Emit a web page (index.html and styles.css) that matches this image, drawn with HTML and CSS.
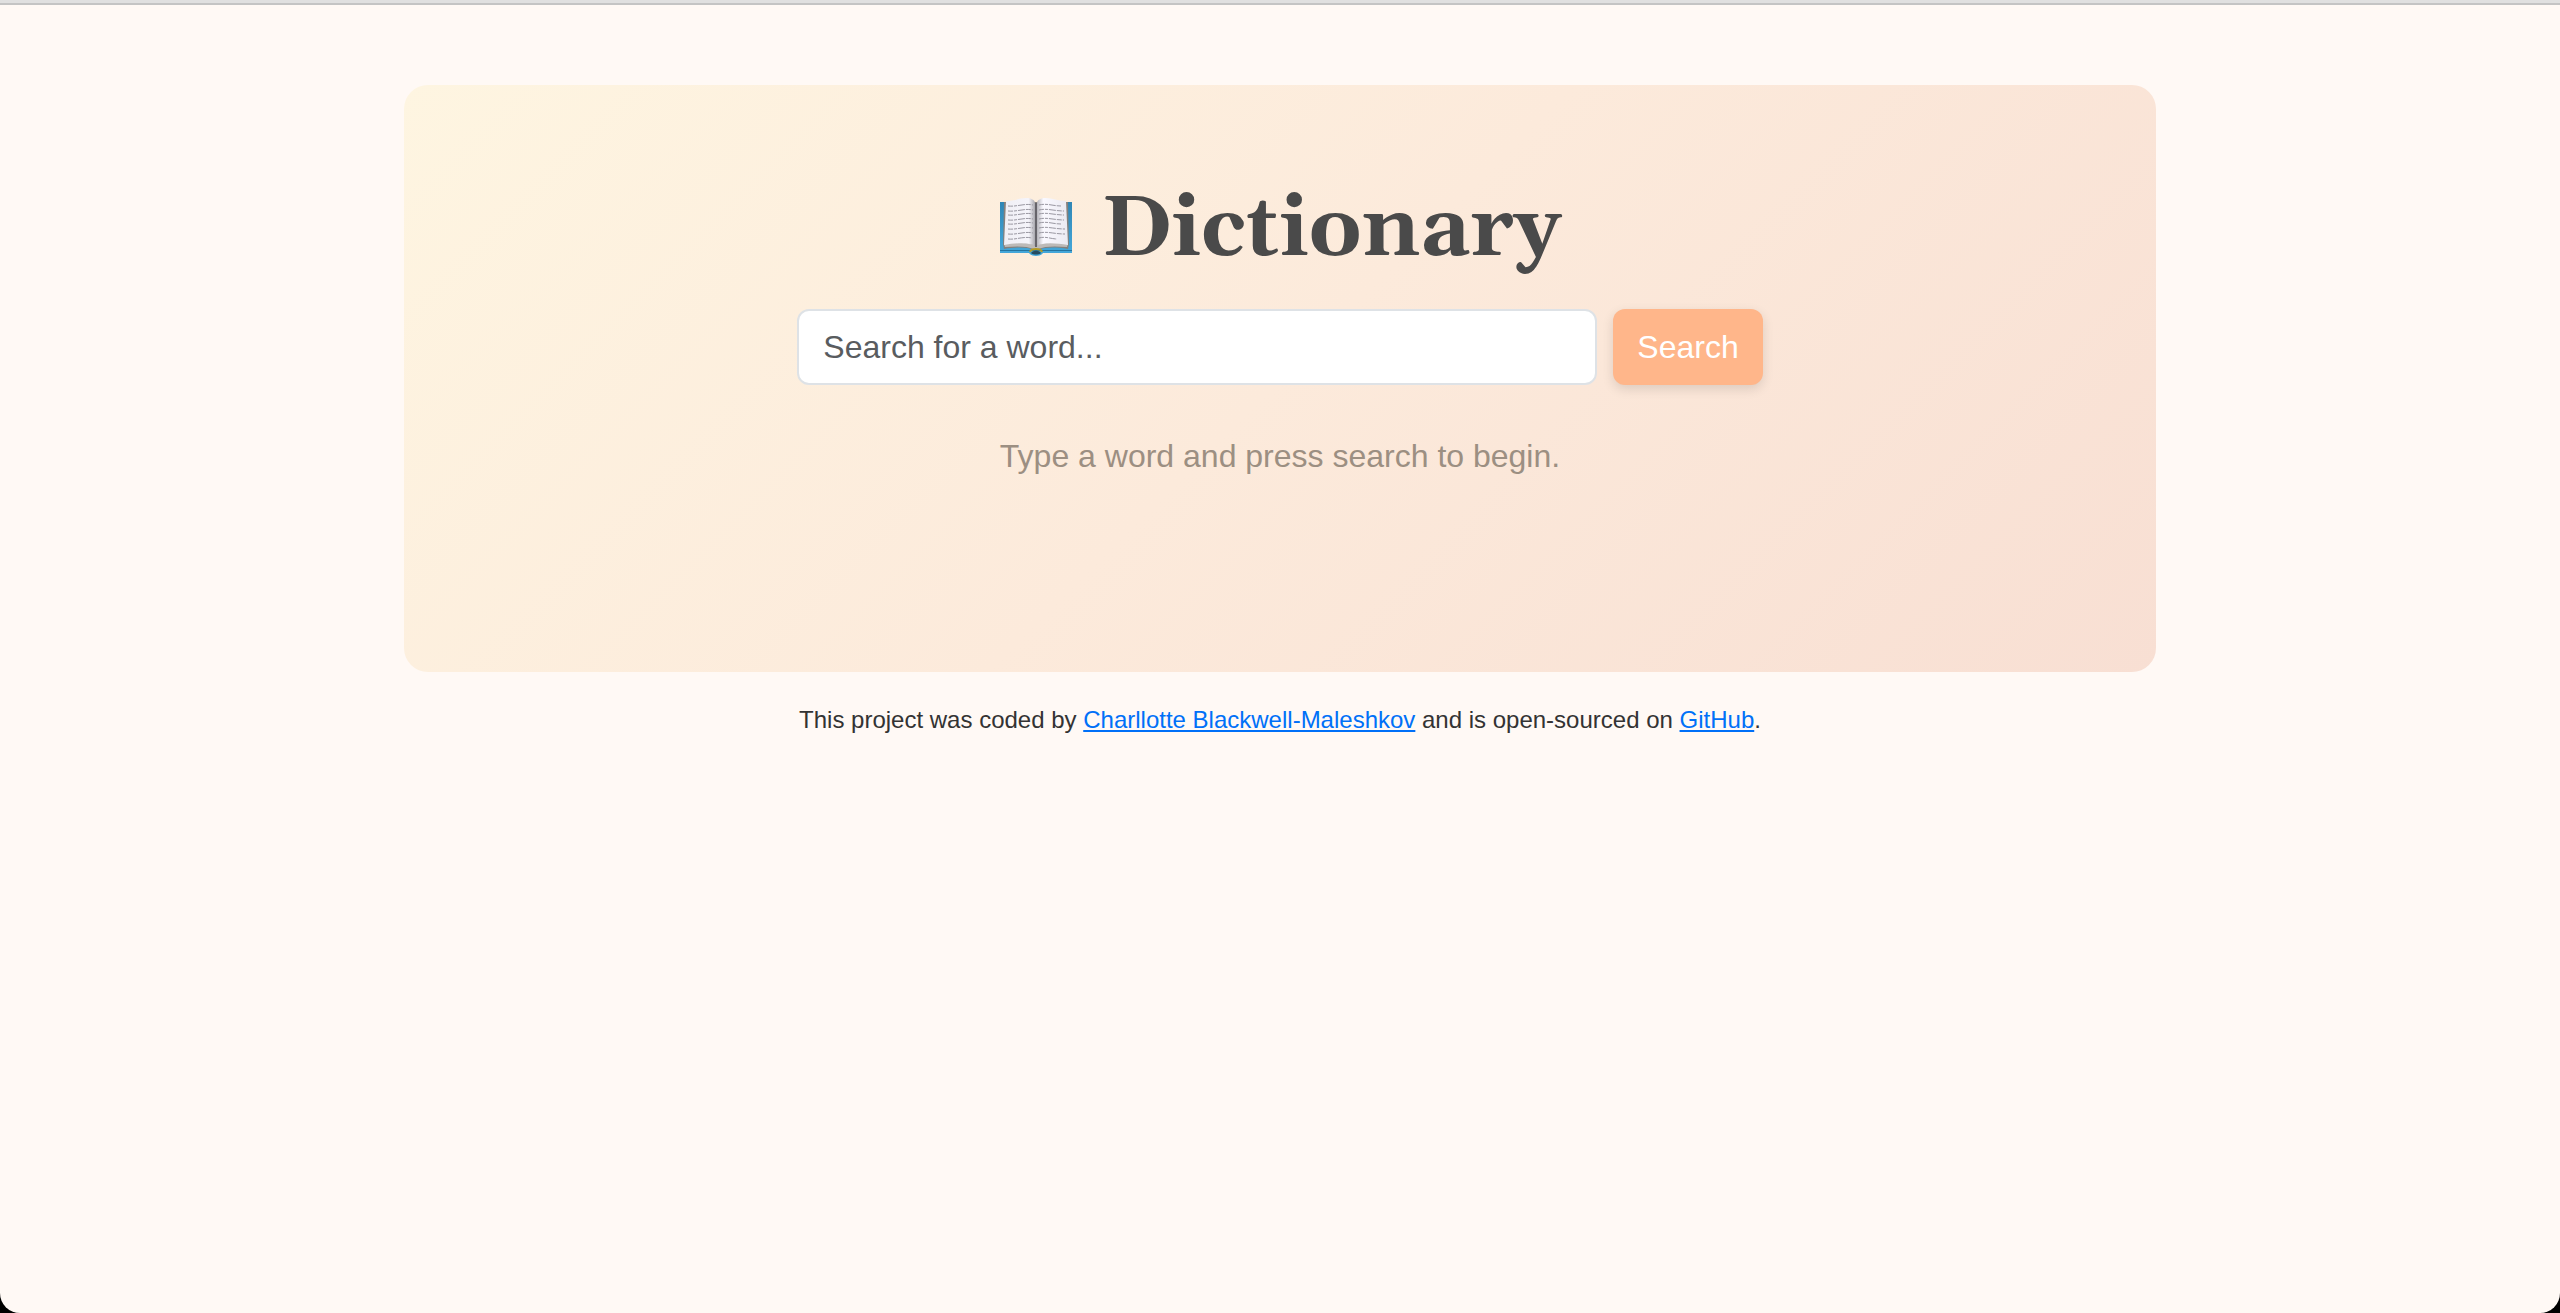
FILE: index.html
```html
<!DOCTYPE html>
<html lang="en">
<head>
    <meta charset="UTF-8">
    <meta name="viewport" content="width=device-width, initial-scale=1.0">
    <title>Dictionary</title>
    <link rel="stylesheet" href="styles.css">
</head>
<body>
    <div class="app">
        <div class="container">
            <main class="dictionary">
                <h1>
                    <svg class="book" viewBox="0 0 74 60" aria-hidden="true">
                        <defs>
                            <linearGradient id="cover" x1="0" y1="0" x2="0" y2="1">
                                <stop offset="0" stop-color="#2f86b5"/>
                                <stop offset="1" stop-color="#45a9dc"/>
                            </linearGradient>
                            <linearGradient id="leftPage" x1="0" y1="0" x2="1" y2="0">
                                <stop offset="0" stop-color="#f0eff5"/>
                                <stop offset="0.8" stop-color="#f5f4fa"/>
                                <stop offset="1" stop-color="#a9a8ae"/>
                            </linearGradient>
                            <linearGradient id="rightPage" x1="0" y1="0" x2="1" y2="0">
                                <stop offset="0" stop-color="#b5b4ba"/>
                                <stop offset="0.2" stop-color="#faf9ff"/>
                                <stop offset="1" stop-color="#ebeaf1"/>
                            </linearGradient>
                        </defs>
                        <path fill="url(#cover)" d="M1 5h72v51H44c-2 4-12 4-14 0H1z"/>
                        <path fill="#2474a0" d="M1 53h72v1H1z"/>
                        <path fill="#85807c" d="M5 5h64l1 42-1 5c-12-2-23-2-30 1h-4c-7-3-18-3-30-1l-1-5z"/>
                        <path fill="#bdbab8" d="M5 47c12-2 24-2 32 2 8-4 20-4 32-2l-1 3c-12-1-22-1-29 2h-4c-7-3-17-3-29-2z"/>
                        <path fill="url(#leftPage)" d="M7 4c9 0 13-3 20-3 5 0 9 2 9 5v43c-6-4-19-3-31-1z"/>
                        <path fill="url(#rightPage)" d="M67 4c-9 0-13-3-20-3-5 0-9 2-9 5v43c6-4 19-3 31-1z"/>
                        <path fill="#66646a" d="M36 6h2v44h-2z"/>
                        <path class="lines" d="M9 9c9 1 16-3 25-1M9 14c9 1 16-3 25-1M9 18c9 1 16-3 25-1M9 23c9 1 16-3 25-1M9 27c9 1 16-3 25-1M9 32c9 1 16-3 25-1M9 37c9 1 16-3 25-1M9 42c8 1 15-3 24-1"/>
                        <path class="lines" d="M40 8c8-2 14 1 22 1M40 13c8-2 15 1 25 1M40 17c8-2 15 1 25 1M40 22c8-2 15 1 25 1M40 26c8-2 14 1 22 1M40 31c8-2 15 1 26 1M40 36c8-2 15 1 26 1M40 41c7-2 12 1 18 1"/>
                        <path fill="none" stroke="#b49b26" stroke-width="2" d="M31 55c1-4 11-4 12 0"/>
                        <path fill="#254b60" d="M32 56c2-3 8-3 10 0-2 2-8 2-10 0z"/>
                    </svg>
                    Dictionary
                </h1>
                <form class="search-form">
                    <input type="search" class="search-input" placeholder="Search for a word..." aria-label="Search for a word">
                    <button type="submit" class="search-btn">Search</button>
                </form>
                <p class="hint">Type a word and press search to begin.</p>
            </main>
            <footer>
                This project was coded by <a href="#">Charllotte Blackwell-Maleshkov</a> and is open-sourced on <a href="#">GitHub</a>.
            </footer>
        </div>
    </div>
</body>
</html>
```

FILE: styles.css
```css
* {
    box-sizing: border-box;
}

html {
    background-color: #000;
}

body {
    font-family: "Helvetica Neue", Helvetica, "Liberation Sans", Arial, sans-serif;
    color: #333;
    margin: 0;
}

.app {
    min-height: 100vh;
    background-color: #fff9f5;
    border-top: 3px solid #e0e0e0;
    border-radius: 0 0 20px 20px;
}

.app::before {
    content: "";
    display: block;
    height: 2px;
    background-color: #c4c4c4;
}

.container {
    max-width: 1800px;
    margin: 0 auto;
    padding: 80px 24px;
}

.dictionary {
    padding: 96px 48px 192px;
    border-radius: 24px;
    background: linear-gradient(135deg, #fef5e1 0%, #fceadb 50%, #f8dfd3 100%);
    text-align: center;
}

h1 {
    display: flex;
    justify-content: center;
    align-items: center;
    gap: 28px;
    margin: 0 0 28px;
    font-family: Georgia, Gelasio, "DejaVu Serif", serif;
    font-size: 84px;
    line-height: 100px;
    font-weight: bold;
    color: #4a4a4a;
}

.book {
    width: 74px;
    height: 60px;
    margin-bottom: 8px;
}

.lines {
    fill: none;
    stroke: #9a98a2;
    stroke-width: 1;
    stroke-dasharray: 5 1 3 1 7 1;
}

.search-form {
    display: flex;
    justify-content: center;
    gap: 16px;
    margin-bottom: 47px;
}

.search-input {
    flex: 0 1 800px;
    min-width: 0;
    padding: 12px 24px;
    border: 2px solid #dee2e6;
    border-radius: 12px;
    background-color: #fff;
    color: #333;
    font-family: inherit;
    font-size: 32px;
    line-height: 48px;
    appearance: none;
}

.search-input::placeholder {
    color: #595c5f;
    opacity: 1;
}

.search-btn {
    padding: 14px 24px;
    border: none;
    border-radius: 12px;
    background-color: #ffb68a;
    box-shadow: 0 4px 12px rgba(0, 0, 0, 0.12);
    color: #fff;
    font-family: inherit;
    font-size: 32px;
    line-height: 48px;
    cursor: pointer;
}

.search-btn:hover {
    background-color: #ffa56f;
}

.hint {
    margin: 0;
    font-size: 32px;
    line-height: 48px;
    color: #9c8f82;
}

footer {
    margin-top: 32px;
    font-size: 24px;
    line-height: 32px;
    text-align: center;
}

footer a {
    color: #0070f8;
}
```
